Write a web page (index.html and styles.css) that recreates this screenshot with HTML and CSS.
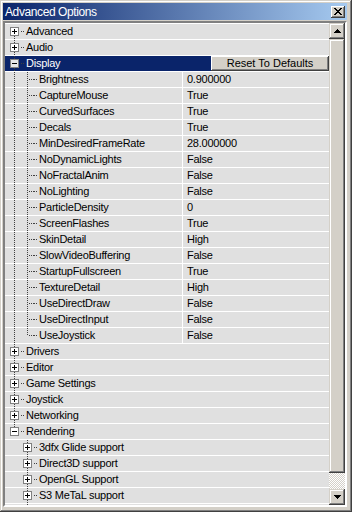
FILE: index.html
```html
<!DOCTYPE html>
<html>
<head>
<meta charset="utf-8">
<title>Advanced Options</title>
<link rel="stylesheet" href="styles.css">
</head>
<body>
<div class="window">
  <div class="titlebar">
    <span class="title">Advanced Options</span>
    <span class="close"><svg width="8" height="7" viewBox="0 0 8 7"><path d="M0 0h2v1H0zM6 0h2v1H6zM1 1h2v1H1zM5 1h2v1H5zM2 2h4v1H2zM3 3h2v1H3zM2 4h4v1H2zM1 5h2v1H1zM5 5h2v1H5zM0 6h2v1H0zM6 6h2v1H6z" fill="#000"/></svg></span>
  </div>
  <div class="panel">
    <div class="tree">
      <div class="row"><div class="label"><span class="g bf"><span class="box plus"></span></span><span class="stub"></span><span class="txt">Advanced</span></div></div>
      <div class="row"><div class="label"><span class="g b"><span class="box plus"></span></span><span class="stub"></span><span class="txt">Audio</span></div></div>
      <div class="row sel"><div class="label wide"><span class="g b"><span class="box minus"></span></span><span class="stub"></span><span class="txt">Display</span></div><div class="btn">Reset To Defaults</div></div>
      <div class="row"><div class="label"><span class="g v"></span><span class="g t"></span><span class="stub"></span><span class="txt">Brightness</span></div><div class="value">0.900000</div></div>
      <div class="row"><div class="label"><span class="g v"></span><span class="g t"></span><span class="stub"></span><span class="txt">CaptureMouse</span></div><div class="value">True</div></div>
      <div class="row"><div class="label"><span class="g v"></span><span class="g t"></span><span class="stub"></span><span class="txt">CurvedSurfaces</span></div><div class="value">True</div></div>
      <div class="row"><div class="label"><span class="g v"></span><span class="g t"></span><span class="stub"></span><span class="txt">Decals</span></div><div class="value">True</div></div>
      <div class="row"><div class="label"><span class="g v"></span><span class="g t"></span><span class="stub"></span><span class="txt">MinDesiredFrameRate</span></div><div class="value">28.000000</div></div>
      <div class="row"><div class="label"><span class="g v"></span><span class="g t"></span><span class="stub"></span><span class="txt">NoDynamicLights</span></div><div class="value">False</div></div>
      <div class="row"><div class="label"><span class="g v"></span><span class="g t"></span><span class="stub"></span><span class="txt">NoFractalAnim</span></div><div class="value">False</div></div>
      <div class="row"><div class="label"><span class="g v"></span><span class="g t"></span><span class="stub"></span><span class="txt">NoLighting</span></div><div class="value">False</div></div>
      <div class="row"><div class="label"><span class="g v"></span><span class="g t"></span><span class="stub"></span><span class="txt">ParticleDensity</span></div><div class="value">0</div></div>
      <div class="row"><div class="label"><span class="g v"></span><span class="g t"></span><span class="stub"></span><span class="txt">ScreenFlashes</span></div><div class="value">True</div></div>
      <div class="row"><div class="label"><span class="g v"></span><span class="g t"></span><span class="stub"></span><span class="txt">SkinDetail</span></div><div class="value">High</div></div>
      <div class="row"><div class="label"><span class="g v"></span><span class="g t"></span><span class="stub"></span><span class="txt">SlowVideoBuffering</span></div><div class="value">False</div></div>
      <div class="row"><div class="label"><span class="g v"></span><span class="g t"></span><span class="stub"></span><span class="txt">StartupFullscreen</span></div><div class="value">True</div></div>
      <div class="row"><div class="label"><span class="g v"></span><span class="g t"></span><span class="stub"></span><span class="txt">TextureDetail</span></div><div class="value">High</div></div>
      <div class="row"><div class="label"><span class="g v"></span><span class="g t"></span><span class="stub"></span><span class="txt">UseDirectDraw</span></div><div class="value">False</div></div>
      <div class="row"><div class="label"><span class="g v"></span><span class="g t"></span><span class="stub"></span><span class="txt">UseDirectInput</span></div><div class="value">False</div></div>
      <div class="row"><div class="label"><span class="g v"></span><span class="g l"></span><span class="stub"></span><span class="txt">UseJoystick</span></div><div class="value">False</div></div>
      <div class="row"><div class="label"><span class="g b"><span class="box plus"></span></span><span class="stub"></span><span class="txt">Drivers</span></div></div>
      <div class="row"><div class="label"><span class="g b"><span class="box plus"></span></span><span class="stub"></span><span class="txt">Editor</span></div></div>
      <div class="row"><div class="label"><span class="g b"><span class="box plus"></span></span><span class="stub"></span><span class="txt">Game Settings</span></div></div>
      <div class="row"><div class="label"><span class="g b"><span class="box plus"></span></span><span class="stub"></span><span class="txt">Joystick</span></div></div>
      <div class="row"><div class="label"><span class="g b"><span class="box plus"></span></span><span class="stub"></span><span class="txt">Networking</span></div></div>
      <div class="row"><div class="label"><span class="g bl"><span class="box minus"></span></span><span class="stub"></span><span class="txt">Rendering</span></div></div>
      <div class="row"><div class="label"><span class="g"></span><span class="g bm"><span class="box plus"></span></span><span class="stub"></span><span class="txt">3dfx Glide support</span></div></div>
      <div class="row"><div class="label"><span class="g"></span><span class="g bm"><span class="box plus"></span></span><span class="stub"></span><span class="txt">Direct3D support</span></div></div>
      <div class="row"><div class="label"><span class="g"></span><span class="g bm"><span class="box plus"></span></span><span class="stub"></span><span class="txt">OpenGL Support</span></div></div>
      <div class="row"><div class="label"><span class="g"></span><span class="g bm"><span class="box plus"></span></span><span class="stub"></span><span class="txt">S3 MeTaL support</span></div></div>
      <div class="row tail"><div class="label"><span class="g"></span><span class="g v"></span></div></div>
    </div>
    <div class="scrollbar">
      <div class="sbtn"><svg width="7" height="4" viewBox="0 0 7 4"><path d="M3 0h1v1H3zM2 1h3v1H2zM1 2h5v1H1zM0 3h7v1H0z" fill="#000"/></svg></div>
      <div class="thumb"></div>
      <div class="track"></div>
      <div class="sbtn"><svg width="7" height="4" viewBox="0 0 7 4"><path d="M0 0h7v1H0zM1 1h5v1H1zM2 2h3v1H2zM3 3h1v1H3z" fill="#000"/></svg></div>
    </div>
  </div>
</div>
</body>
</html>
```
FILE: styles.css
```css
html, body {
  margin: 0;
  padding: 0;
  background: #d4d0c8;
}

.window {
  width: 352px;
  height: 512px;
  box-sizing: border-box;
  padding: 3px 5px 5px 3px;
  display: flex;
  flex-direction: column;
  background: #d4d0c8;
  box-shadow: inset -1px -1px #404040, inset 1px 1px #d4d0c8, inset -2px -2px #808080, inset 2px 2px #ffffff;
  font-family: "Liberation Sans", Arial, sans-serif;
  font-size: 11px;
  letter-spacing: -0.25px;
  color: #000;
}

.titlebar {
  height: 17px;
  display: flex;
  align-items: center;
  justify-content: space-between;
  background: linear-gradient(to right, #0a246a, #a6caf0);
  padding: 0 2px 0 2px;
  margin-bottom: 1px;
}

.title {
  color: #fff;
  font-size: 12px;
  letter-spacing: -0.4px;
  line-height: 17px;
  padding-top: 1px;
}

.close {
  width: 14px;
  height: 12px;
  box-sizing: border-box;
  display: flex;
  align-items: center;
  justify-content: center;
  background: #d4d0c8;
  box-shadow: inset -1px -1px #404040, inset 1px 1px #ffffff, inset -2px -2px #808080;
}

.panel {
  flex: 1;
  display: flex;
  box-sizing: border-box;
  border-style: solid;
  border-width: 2px;
  border-color: #808080 #ffffff #ffffff #808080;
  box-shadow: inset 1px 1px #404040, inset -1px -1px #d4d0c8;
  min-height: 0;
}

.tree {
  flex: 1;
  background: #e0e0e0;
  overflow: hidden;
  --dv: repeating-linear-gradient(to bottom, #404040 0 1px, transparent 1px 2px);
  --dh: repeating-linear-gradient(to right, #404040 0 1px, transparent 1px 2px);
}

.row {
  display: flex;
  height: 15px;
  border-top: 1px solid #ffffff;
  line-height: 15px;
  white-space: nowrap;
}

.row.tail {
  height: 1px;
}

.label {
  display: flex;
  width: 177px;
  box-sizing: border-box;
  padding-left: 3px;
  flex-shrink: 0;
}

.value {
  border-left: 1px solid #ffffff;
  padding-left: 4px;
}

.g {
  display: block;
  width: 13px;
  height: 100%;
  flex-shrink: 0;
}

.v { background: var(--dv) 6px 0 / 1px 15px no-repeat; }
.t { background: var(--dv) 6px 0 / 1px 15px no-repeat, var(--dh) 8px 7px / 5px 1px no-repeat; }
.l { background: var(--dv) 6px 0 / 1px 8px no-repeat, var(--dh) 8px 7px / 5px 1px no-repeat; }
.b { background: var(--dv) 6px 0 / 1px 15px no-repeat; }
.bm { background: var(--dv) 6px 0 / 1px 15px no-repeat; }
.bf { background: var(--dv) 6px 8px / 1px 7px no-repeat; }
.bl { background: var(--dv) 6px 0 / 1px 4px no-repeat; }

.stub {
  width: 4px;
  flex-shrink: 0;
  margin-right: 1px;
  background: var(--dh) 0 7px / 4px 1px no-repeat;
}

.g .box {
  display: block;
  width: 9px;
  height: 9px;
  box-sizing: border-box;
  margin: 3px 0 0 2px;
  border: 1px solid #808080;
}

.box.plus {
  background:
    linear-gradient(#000, #000) 1px 3px / 5px 1px no-repeat,
    linear-gradient(#000, #000) 3px 1px / 1px 5px no-repeat,
    #ffffff;
}

.box.minus {
  background:
    linear-gradient(#000, #000) 1px 3px / 5px 1px no-repeat,
    #ffffff;
}

.row.sel .label.wide {
  width: 206px;
  background: #0a246a;
  color: #fff;
}

.row.sel .box {
  background:
    linear-gradient(#000, #000) 1px 3px / 5px 1px no-repeat,
    #e8e8e8;
}

.btn {
  flex: 1;
  text-align: center;
  letter-spacing: 0;
  background: #d4d0c8;
  box-shadow: inset -1px -1px #404040, inset 1px 1px #ffffff, inset -2px -2px #808080;
  line-height: 15px;
}

.scrollbar {
  width: 16px;
  display: flex;
  flex-direction: column;
  flex-shrink: 0;
}

.sbtn {
  height: 16px;
  flex-shrink: 0;
  display: flex;
  align-items: center;
  justify-content: center;
  background: #d4d0c8;
  box-shadow: inset -1px -1px #404040, inset 1px 1px #d4d0c8, inset -2px -2px #808080, inset 2px 2px #ffffff;
}

.thumb {
  flex: 1;
  background: #d4d0c8;
  box-shadow: inset -1px -1px #404040, inset 1px 1px #d4d0c8, inset -2px -2px #808080, inset 2px 2px #ffffff;
}

.track {
  height: 16px;
  flex-shrink: 0;
  background: repeating-conic-gradient(#d4d0c8 0 25%, #ffffff 0 50%) 0 0 / 2px 2px;
}
```
